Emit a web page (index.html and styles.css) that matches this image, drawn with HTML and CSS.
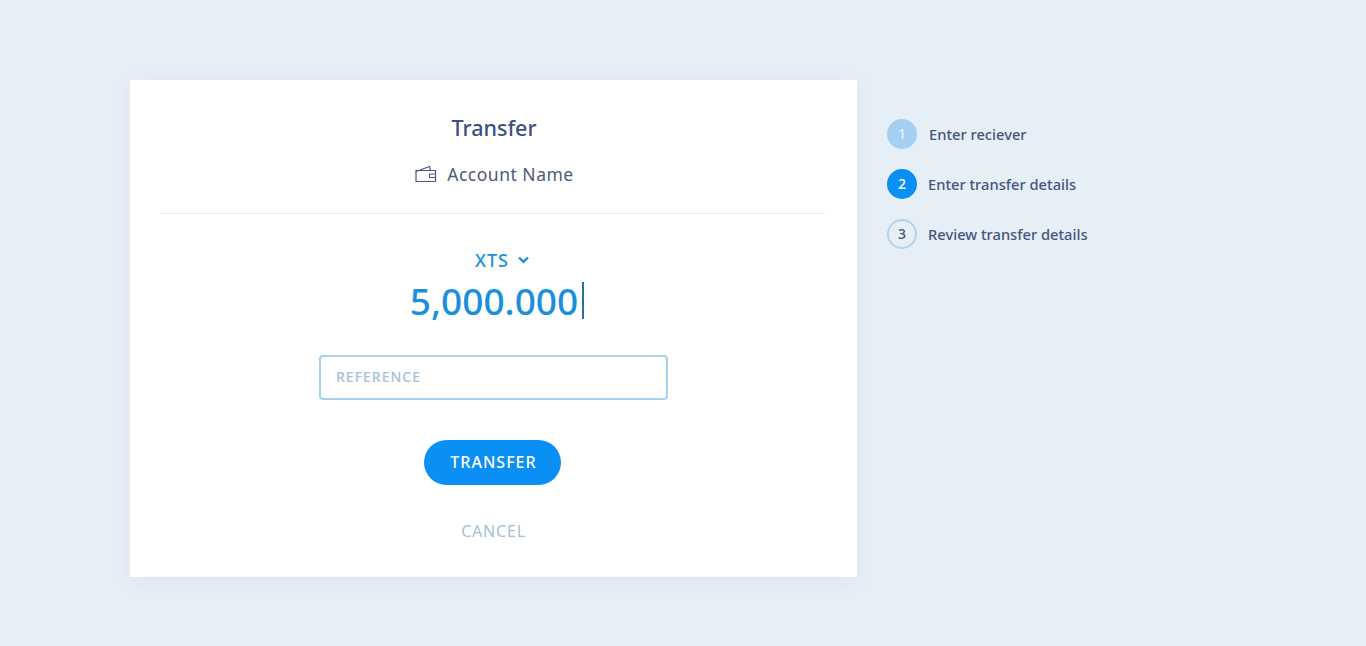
FILE: index.html
```html
<!DOCTYPE html>
<html lang="en">
  <head>
    <meta charset="UTF-8" />
    <meta name="viewport" content="width=device-width, initial-scale=1.0" />
    <title>Transfer</title>
    <link rel="stylesheet" href="styles.css">
  </head>
  <body>
    <main class="main">
      <div class="card">
        <div class="card__head">
          <div class="card__title">Transfer</div>
          <div class="account">
            <svg class="account__icon" width="22" height="18" viewBox="0 0 22 18" fill="none" stroke="#4a5a80" stroke-width="1.2">
              <path d="M1 6.5 L14.5 1.5 L15.5 5" />
              <path d="M1 5.5 H20.5 V16.5 H1 Z" />
              <path d="M20.5 9 H14.5 V12.5 H20.5" />
            </svg>
            <span>Account Name</span>
          </div>
        </div>
        <div class="currency">
          <span>XTS</span>
          <svg width="11" height="8" viewBox="0 0 11 8" fill="none" stroke="#1a8fdc" stroke-width="2.4">
            <path d="M1 1.5 L5.5 5.8 L10 1.5" />
          </svg>
        </div>
        <div class="amount"><span>5,000.000</span><i class="amount__caret"></i></div>
        <input class="reference" type="text" placeholder="REFERENCE" />
        <button class="btn">TRANSFER</button>
        <a class="cancel">CANCEL</a>
      </div>
      <ul class="steps">
        <li class="steps__item"><span class="steps__num steps__num--done">1</span><span class="steps__text steps__text--first">Enter reciever</span></li>
        <li class="steps__item"><span class="steps__num steps__num--active">2</span><span class="steps__text">Enter transfer details</span></li>
        <li class="steps__item"><span class="steps__num">3</span><span class="steps__text">Review transfer details</span></li>
      </ul>
    </main>
  </body>
</html>
```

FILE: styles.css
```css
html,
body {
  height: 100%;
  margin: 0;
}
body {
  background-color: #e6eef6;
  font-family: "Noto Sans", "Open Sans", sans-serif;
  color: #3f4f78;
}
.main {
  display: flex;
  align-items: flex-start;
  padding: 80px 0 0 130px;
}
.card {
  width: 727px;
  height: 497px;
  background-color: #fff;
  box-shadow: 0 4px 16px rgba(120, 150, 190, 0.08);
  display: flex;
  flex-direction: column;
  align-items: center;
  box-sizing: border-box;
  padding: 0 32px 0 30px;
}
.card__head {
  width: 100%;
  height: 134px;
  box-sizing: border-box;
  padding-top: 32px;
  border-bottom: 1px solid #e9edf2;
  text-align: center;
}
.card__title {
  margin-left: 3px;
  font-size: 21.5px;
  line-height: 32px;
  font-weight: 500;
  color: #3c5080;
}
.account {
  margin-top: 14px;
  margin-left: 2px;
  display: flex;
  justify-content: center;
  align-items: center;
  gap: 10px;
  font-size: 17.5px;
  line-height: 32px;
  letter-spacing: 0.5px;
  color: #4c5a7c;
}
.account__icon {
  margin-left: 2px;
}
.currency {
  margin: 33px 0 0 19px;
  display: flex;
  align-items: center;
  gap: 9px;
  font-size: 18px;
  line-height: 26px;
  font-weight: 500;
  letter-spacing: 1px;
  color: #1a8fdc;
}
.amount {
  margin: 4px 0 0 9px;
  display: flex;
  align-items: center;
  height: 46px;
  font-size: 37px;
  font-weight: 500;
  color: #1a8fe0;
}
.amount__caret {
  width: 2px;
  height: 37px;
  margin-left: 4px;
  background-color: #2a6f9f;
}
.reference {
  margin-top: 32px;
  margin-left: 2px;
  width: 349px;
  height: 45px;
  box-sizing: border-box;
  padding: 0 15px 2px;
  border: 2px solid #a9d0ea;
  border-radius: 4px;
  background-color: #fff;
  font-family: inherit;
  font-size: 14px;
  letter-spacing: 1px;
  outline: none;
}
.reference::placeholder {
  color: #a3c1d8;
  font-weight: 500;
  opacity: 1;
}
.btn {
  margin-top: 40px;
  width: 137px;
  height: 45px;
  padding: 0 0 2px 2px;
  border: 0;
  border-radius: 23px;
  background-color: #0a8ff5;
  color: #fff;
  font-family: inherit;
  font-size: 16px;
  font-weight: 500;
  letter-spacing: 1px;
  cursor: pointer;
}
.cancel {
  margin-top: 34px;
  margin-left: 2px;
  font-size: 16px;
  line-height: 24px;
  letter-spacing: 0.8px;
  color: #9fc2d8;
}
.steps {
  list-style: none;
  margin: 39px 0 0 30px;
  padding: 0;
  display: flex;
  flex-direction: column;
  gap: 20px;
}
.steps__item {
  display: flex;
  align-items: center;
  gap: 11px;
  height: 30px;
  font-size: 14.7px;
  line-height: 28px;
  font-weight: 500;
  color: #45557f;
}
.steps__text--first {
  margin-left: 1px;
  margin-bottom: 1px;
}
.steps__num {
  width: 30px;
  height: 30px;
  box-sizing: border-box;
  border: 2px solid #b6d3ea;
  border-radius: 50%;
  display: flex;
  justify-content: center;
  align-items: center;
  font-size: 14px;
}
.steps__num--done {
  background-color: #a3cff2;
  border-color: #a3cff2;
  color: #e7f3fc;
}
.steps__num--active {
  background-color: #0a8ff5;
  border-color: #0a8ff5;
  color: #fff;
}
```
